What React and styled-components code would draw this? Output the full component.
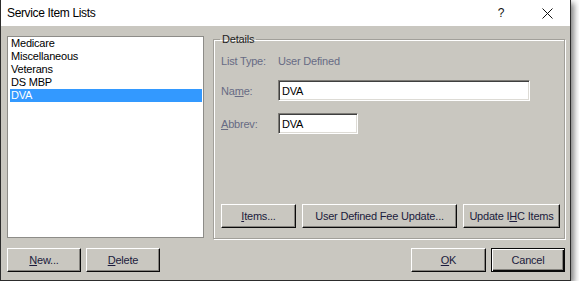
import React from "react";
import styled, { createGlobalStyle, css } from "styled-components";

const Global = createGlobalStyle`
  html, body { margin: 0; padding: 0; background: #ffffff; }
  body { font-family: "Liberation Sans", Arial, sans-serif; }
  * { box-sizing: border-box; }
`;

const FACE = "#c9c7c0";

const Window = styled.div`
  width: 571px;
  display: flex;
  flex-direction: column;
  border: 1px solid #2c2c2c;
  border-top: none;
  box-shadow: 3px 3px 6px rgba(0, 0, 0, 0.5);
  background: ${FACE};
  font-family: "Liberation Sans", Arial, sans-serif;
  font-size: 11px;
  letter-spacing: -0.2px;
`;

const TitleBar = styled.div`
  height: 26px;
  background: #ffffff;
  display: flex;
  align-items: center;
`;

const Title = styled.div`
  flex: 1;
  padding-left: 6px;
  font-size: 12px;
  letter-spacing: -0.35px;
  color: #000;
`;

const CaptionButton = styled.div`
  width: 46px;
  height: 26px;
  display: flex;
  align-items: center;
  justify-content: center;
  font-size: 12px;
  color: #111;
`;

const Body = styled.div`
  display: flex;
  flex-direction: column;
  padding: 7px 5px 8px 6px;
`;

const TopRow = styled.div`
  display: flex;
  gap: 9px;
  height: 206px;
`;

const ListBox = styled.div`
  width: 197px;
  height: 202px;
  margin-top: 3px;
  background: #ffffff;
  border: 1px solid #8d8c88;
  padding: 0 1px 0 2px;
  display: flex;
  flex-direction: column;
`;

const ListItem = styled.div`
  height: 13px;
  line-height: 13px;
  padding-left: 1px;
  color: #000;
  white-space: nowrap;
  ${(p) =>
    p.$selected &&
    css`
      background: #3399ff;
      color: #ffffff;
    `}
`;

const Group = styled.fieldset`
  margin: 0;
  width: 352px;
  height: 206px;
  border: 1px solid #a2a09a;
  box-shadow: inset 1px 1px 0 #ffffff, 1px 1px 0 #ffffff;
  padding: 8px 3px 10px 7px;
  display: flex;
  flex-direction: column;
  min-width: 0;
`;

const Legend = styled.legend`
  padding: 0 2px;
  margin-left: -1px;
  line-height: 13px;
  color: #1e1e1e;
`;

const Fields = styled.div`
  display: grid;
  grid-template-columns: 57px 1fr;
  grid-template-rows: 14px 21px 21px;
  row-gap: 12px;
  align-items: center;
`;

const Label = styled.div`
  color: #676b84;
  white-space: nowrap;
`;

const TextBox = styled.div`
  width: ${(p) => p.$w}px;
  height: 21px;
  background: #ffffff;
  border: 1px solid;
  border-color: #7e7c77 #ffffff #ffffff #7e7c77;
  box-shadow: inset 1px 1px 0 #3f3f3f, inset -1px -1px 0 #dddbd5;
  padding: 0 3px;
  display: flex;
  align-items: center;
  color: #000;
`;

const ButtonRow = styled.div`
  margin-top: auto;
  display: flex;
  gap: 6px;
`;

const BottomRow = styled.div`
  margin-top: 9px;
  display: flex;
  gap: 5px;
`;

const Spacer = styled.div`
  flex: 1;
`;

const Button = styled.div`
  width: ${(p) => p.$w || 75}px;
  height: 24px;
  display: flex;
  align-items: center;
  justify-content: center;
  white-space: nowrap;
  color: #1b1b3c;
  background: ${FACE};
  border: 1px solid;
  border-color: #ffffff #0a0a0a #0a0a0a #ffffff;
  box-shadow: inset -1px -1px 0 #85837e;
  ${(p) =>
    p.$default &&
    css`
      border-color: #0a0a0a;
      box-shadow: inset 1px 1px 0 #ffffff, inset -1px -1px 0 #0a0a0a,
        inset -2px -2px 0 #85837e;
    `}
`;

const Key = styled.span`
  text-decoration: underline;
  text-underline-offset: 1px;
`;

const items = ["Medicare", "Miscellaneous", "Veterans", "DS MBP", "DVA"];

export default function App() {
  return (
    <>
      <Global />
      <Window>
        <TitleBar>
          <Title>Service Item Lists</Title>
          <CaptionButton>?</CaptionButton>
          <CaptionButton>
            <svg width="11" height="11" viewBox="0 0 11 11">
              <path d="M0.5 0.5 L10.5 10.5 M10.5 0.5 L0.5 10.5" stroke="#111" strokeWidth="1" fill="none" />
            </svg>
          </CaptionButton>
        </TitleBar>
        <Body>
          <TopRow>
            <ListBox>
              {items.map((it) => (
                <ListItem key={it} $selected={it === "DVA"}>
                  {it}
                </ListItem>
              ))}
            </ListBox>
            <Group>
              <Legend>Details</Legend>
              <Fields>
                <Label>List Type:</Label>
                <Label>User Defined</Label>
                <Label>
                  Na<Key>m</Key>e:
                </Label>
                <TextBox $w={252}>DVA</TextBox>
                <Label>
                  <Key>A</Key>bbrev:
                </Label>
                <TextBox $w={80}>DVA</TextBox>
              </Fields>
              <ButtonRow>
                <Button $w={75}>
                  <Key>I</Key>tems...
                </Button>
                <Button $w={155}>User Defined Fee Update...</Button>
                <Button $w={97}>
                  Update I<Key>H</Key>C Items
                </Button>
              </ButtonRow>
            </Group>
          </TopRow>
          <BottomRow>
            <Button $w={74}>
              <Key>N</Key>ew...
            </Button>
            <Button $w={74}>
              <Key>D</Key>elete
            </Button>
            <Spacer />
            <Button $w={75}>
              <Key>O</Key>K
            </Button>
            <Button $w={74} $default>
              Cancel
            </Button>
          </BottomRow>
        </Body>
      </Window>
    </>
  );
}
